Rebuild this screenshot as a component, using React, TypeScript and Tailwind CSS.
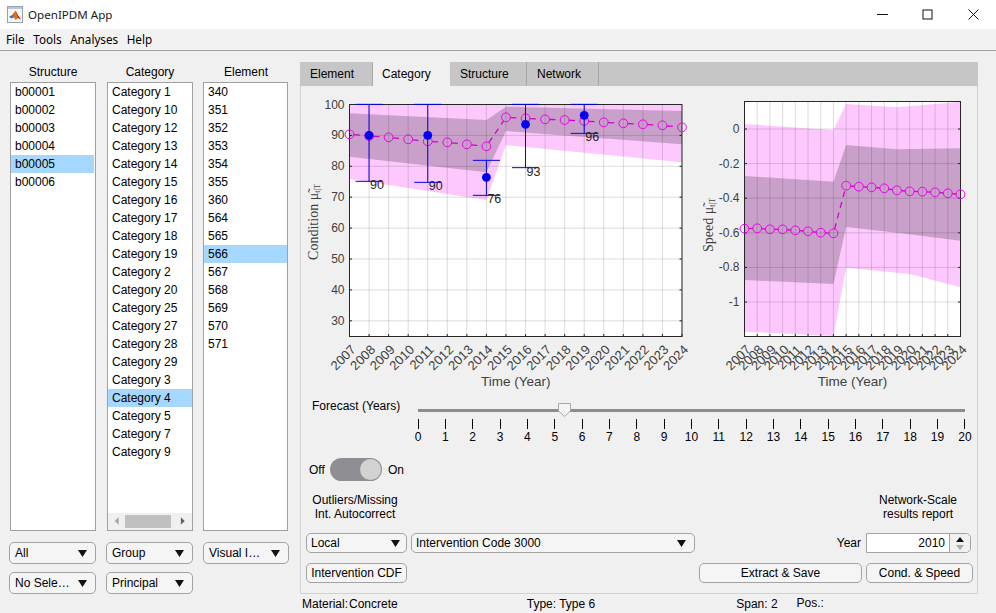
const structures = ["b00001", "b00002", "b00003", "b00004", "b00005", "b00006"];
const categories = [
  "Category 1", "Category 10", "Category 12", "Category 13", "Category 14", "Category 15", "Category 16",
  "Category 17", "Category 18", "Category 19", "Category 2", "Category 20", "Category 25", "Category 27",
  "Category 28", "Category 29", "Category 3", "Category 4", "Category 5", "Category 7", "Category 9",
];
const elements = ["340", "351", "352", "353", "354", "355", "360", "564", "565", "566", "567", "568", "569", "570", "571"];
const years = Array.from({ length: 18 }, (_, i) => 2007 + i);

const AXIS_TEXT = "#404040";
const LIGHT_BAND = "#fdc8fd";
const DARK_BAND = "#c9a0c9";
const MAGENTA = "#f000f0";
const MARKER_R = 4.4;

function Arrow({ color = "#111111" }: { color?: string }) {
  return (
    <svg width="9" height="7" viewBox="0 0 9 7" className="shrink-0">
      <path d="M0 0H9L4.5 7Z" fill={color} />
    </svg>
  );
}

function Dropdown({ label, className }: { label: string; className: string }) {
  return (
    <div className={`flex items-center justify-between h-[22px] pl-[5px] pr-[8px] bg-[#f5f5f5] border border-[#a3a3a3] rounded-[5px] text-[12px] ${className}`}>
      <span>{label}</span>
      <Arrow />
    </div>
  );
}

function PushButton({ label, className }: { label: string; className: string }) {
  return (
    <div className={`flex items-center justify-center h-[20px] bg-[#f5f5f5] border border-[#a3a3a3] rounded-[5px] text-[12px] ${className}`}>
      {label}
    </div>
  );
}

function ListBox({ items, selected, hScroll, className, rowsClass }: { items: string[]; selected: string; hScroll?: boolean; className: string; rowsClass?: string }) {
  return (
    <div className={`flex flex-col bg-white border border-[#a0a0a0] text-[12px] ${className}`}>
      <div className={`flex-1 ${rowsClass ?? ""}`}>
        {items.map((item) => (
          <div key={item} className={`h-[18px] leading-[18px] pl-[4px] ${item === selected ? "bg-[#a6d8ff]" : ""}`}>
            {item}
          </div>
        ))}
      </div>
      {hScroll && (
        <div className="flex items-center h-[17px] bg-[#f0f0f0]">
          <svg width="16" height="9" viewBox="0 0 16 9" className="ml-[1px]">
            <path d="M10 0V8L6 4Z" fill="#a3a3a3" />
          </svg>
          <div className="w-[47px] h-[13px] ml-[1px] bg-[#c0c0c0]" />
          <svg width="16" height="9" viewBox="0 0 16 9" className="ml-[6px]">
            <path d="M4 0V8L8 4Z" fill="#606060" />
          </svg>
        </div>
      )}
    </div>
  );
}

function Column({ title, children }: { title: string; children: React.ReactNode }) {
  return (
    <div className="flex flex-col">
      <div className="h-[31px] pt-[14px] text-center text-[12px] leading-[14px]">{title}</div>
      {children}
    </div>
  );
}

type PlotSpec = {
  viewBox: string;
  width: number;
  left: number;
  right: number;
  top: number;
  bottom: number;
  yTicks: { label: string; y: number }[];
  lightBand: string;
  darkBand: string;
  means: number[];
  label: string;
  labelY: number;
  yTextX: number;
  clipId: string;
};

function Plot({ spec, children }: { spec: PlotSpec; children?: React.ReactNode }) {
  const { left, right, top, bottom } = spec;
  const step = (right - left) / 17;
  const xs = years.map((_, i) => left + i * step);
  return (
    <svg width={spec.width} height="309" viewBox={spec.viewBox} className="block shrink-0" style={{ fontFamily: '"Liberation Sans", Arial, sans-serif' }}>
      <defs>
        <clipPath id={spec.clipId}>
          <rect x={left} y={top} width={right - left} height={bottom - top} />
        </clipPath>
      </defs>
      <rect x={left} y={top} width={right - left} height={bottom - top} fill="#ffffff" />
      <g clipPath={`url(#${spec.clipId})`}>
        <polygon points={spec.lightBand} fill={LIGHT_BAND} />
        <polygon points={spec.darkBand} fill={DARK_BAND} />
        {xs.map((x) => (
          <line key={x} x1={x} x2={x} y1={top} y2={bottom} stroke="#262626" strokeOpacity="0.16" />
        ))}
        {spec.yTicks.map((t) => (
          <line key={t.label} x1={left} x2={right} y1={t.y} y2={t.y} stroke="#262626" strokeOpacity="0.16" />
        ))}
      </g>
      <rect x={left} y={top} width={right - left} height={bottom - top} fill="none" stroke="#262626" />
      {xs.map((x) => (
        <line key={x} x1={x} x2={x} y1={bottom} y2={bottom - 2.5} stroke="#262626" />
      ))}
      {spec.yTicks.map((t) => (
        <g key={t.label}>
          <line x1={left} x2={left + 2.5} y1={t.y} y2={t.y} stroke="#262626" />
          <line x1={right} x2={right - 2.5} y1={t.y} y2={t.y} stroke="#262626" />
          <text x={left - 5} y={t.y + 4} textAnchor="end" fontSize="12" fill={AXIS_TEXT}>
            {t.label}
          </text>
        </g>
      ))}
      {/* each segment starts at the marker edge so the dash pattern restarts there */}
      {spec.means.slice(0, -1).map((y, i) => {
        const x1 = xs[i];
        const x2 = xs[i + 1];
        const y2 = spec.means[i + 1];
        const len = Math.hypot(x2 - x1, y2 - y);
        const ux = (x2 - x1) / len;
        const uy = (y2 - y) / len;
        return (
          <line
            key={i}
            x1={x1 + ux * MARKER_R}
            y1={y + uy * MARKER_R}
            x2={x2 - ux * MARKER_R}
            y2={y2 - uy * MARKER_R}
            stroke="#d000d0"
            strokeWidth="1.3"
            strokeDasharray="6 5"
          />
        );
      })}
      {spec.means.map((y, i) => (
        <circle key={i} cx={xs[i]} cy={y} r={MARKER_R} fill="none" stroke={MAGENTA} strokeWidth="1" />
      ))}
      {children}
      {xs.map((x, i) => (
        <text key={x} x={x + 7} y={bottom + 14} textAnchor="end" fontSize="13" fill={AXIS_TEXT} transform={`rotate(-45 ${x + 7} ${bottom + 14})`}>
          {years[i]}
        </text>
      ))}
      <text x={(left + right) / 2} y={bottom + 49} textAnchor="middle" fontSize="13.5" fill={AXIS_TEXT}>
        Time (Year)
      </text>
      <text
        x={spec.yTextX}
        y={spec.labelY}
        textAnchor="middle"
        fontSize="14"
        fill={AXIS_TEXT}
        transform={`rotate(-90 ${spec.yTextX} ${spec.labelY})`}
        style={{ fontFamily: '"Liberation Serif", serif' }}
      >
        {spec.label} μ̃<tspan fontSize="8" dy="2">t|T</tspan>
      </text>
    </svg>
  );
}

const condY = (z: number) => 55 + z / 3;
const condX = (i: number) => 349.5 + (i * 332.5) / 17;

const conditionSpec: PlotSpec = {
  viewBox: "301 86 399 309",
  width: 399,
  left: 349.5,
  right: 682,
  top: 104.5,
  bottom: 336.5,
  yTicks: [100, 90, 80, 70, 60, 50, 40, 30].map((v) => ({ label: String(v), y: 104.5 + (100 - v) * 3.09 })),
  lightBand: `${condX(0)},100 ${condX(17)},100 ${condX(17)},${condY(322)} ${condX(8)},${condY(270)} ${condX(7)},${condY(435)} ${condX(0)},${condY(372)}`,
  darkBand: `${condX(0)},${condY(175)} ${condX(7)},${condY(195)} ${condX(8)},${condY(155)} ${condX(17)},${condY(168)} ${condX(17)},${condY(268)} ${condX(8)},${condY(228)} ${condX(7)},${condY(352)} ${condX(0)},${condY(305)}`,
  means: [238, 243, 247, 253, 259, 262, 268, 274, 187, 190, 193, 195, 198, 202, 205, 208, 211, 217].map(condY),
  label: "Condition",
  labelY: 222,
  yTextX: 318,
  clipId: "condition-clip",
};

const speedY = (z: number) => 90 + z / 3;
const speedX = (i: number) => 744.5 + (i * 216) / 17;

const speedSpec: PlotSpec = {
  viewBox: "700 86 276 309",
  width: 276,
  left: 744.5,
  right: 960.5,
  top: 101.5,
  bottom: 336.5,
  yTicks: [
    { label: "0", y: 129 },
    { label: "-0.2", y: 163.6 },
    { label: "-0.4", y: 198.2 },
    { label: "-0.6", y: 232.8 },
    { label: "-0.8", y: 267.4 },
    { label: "-1", y: 302 },
  ],
  lightBand: `${speedX(0)},${speedY(102)} ${speedX(7)},${speedY(120)} ${speedX(8)},${speedY(42)} ${speedX(12)},${speedY(52)} ${speedX(17)},${speedY(35)} ${speedX(17)},${speedY(592)} ${speedX(13)},${speedY(552)} ${speedX(8)},${speedY(533)} ${speedX(7)},${speedY(738)} ${speedX(0)},${speedY(725)}`,
  darkBand: `${speedX(0)},${speedY(258)} ${speedX(7)},${speedY(275)} ${speedX(8)},${speedY(165)} ${speedX(12)},${speedY(178)} ${speedX(17)},${speedY(175)} ${speedX(17)},${speedY(452)} ${speedX(12)},${speedY(428)} ${speedX(8)},${speedY(411)} ${speedX(7)},${speedY(582)} ${speedX(0)},${speedY(570)}`,
  means: [416, 415, 418, 418, 421, 424, 428, 430, 287, 290, 292, 295, 301, 304, 305, 307, 310, 313].map(speedY),
  label: "Speed",
  labelY: 225,
  yTextX: 713,
  clipId: "speed-clip",
};

const observations = [
  { i: 1, y: 241, low: 379, high: 148, label: "90", dy: 390 },
  { i: 4, y: 241, low: 382, high: 148, label: "90", dy: 393 },
  { i: 7, y: 367, low: 421, high: 316, label: "76", dy: 432 },
  { i: 9, y: 208, low: 338, high: 148, label: "93", dy: 351 },
  { i: 12, y: 181, low: 235, high: 148, label: "96", dy: 246 },
];

function Observations() {
  return (
    <g>
      {observations.map((o) => {
        const x = condX(o.i);
        return (
          <g key={o.i}>
            <line x1={x} x2={x} y1={condY(o.high)} y2={condY(o.low)} stroke="#0000f0" strokeWidth="1" />
            <line x1={x - 13.5} x2={x + 13.5} y1={condY(o.high)} y2={condY(o.high)} stroke="#0000f0" strokeWidth="1" />
            <line x1={x - 13.5} x2={x + 13.5} y1={condY(o.low)} y2={condY(o.low)} stroke="#0000f0" strokeWidth="1" />
            <circle cx={x} cy={condY(o.y)} r="4.4" fill="#0000f0" />
            <text x={x + 1} y={condY(o.dy) + 4} fontSize="12.5" fill="#262626">
              {o.label}
            </text>
          </g>
        );
      })}
    </g>
  );
}

function ForecastSlider() {
  const ticks = Array.from({ length: 21 }, (_, i) => i);
  return (
    <div className="relative w-[547px] mt-[14px]">
      <div className="h-[3px] bg-[#8c8c8c]" />
      <svg width="13" height="14" viewBox="0 0 13 14" className="absolute left-[140px] top-[-6px]">
        <path d="M0.5 0.5H12.5V8L6.5 13.5L0.5 8Z" fill="#f4f4f4" stroke="#a8a8a8" />
      </svg>
      <div className="flex justify-between mt-[7px]">
        {ticks.map((t) => (
          <div key={t} className="flex flex-col items-center w-0">
            <div className="w-[1px] h-[10px] bg-black shrink-0" />
            <div className="text-[12px] leading-[14px] mt-[1px]">{t}</div>
          </div>
        ))}
      </div>
    </div>
  );
}

function Logo() {
  return (
    <svg width="16" height="17" viewBox="0 0 16 17" className="shrink-0">
      <rect x="0.5" y="0.5" width="15" height="16" fill="#f4f6f8" stroke="#98a2ae" />
      <rect x="1" y="1" width="14" height="2" fill="#bcc5d0" />
      <path d="M2 11L5.5 9L8.5 4.5L11 9.5L14 13.5L11 12L8.5 14L6.5 11Z" fill="#e8701a" />
      <path d="M2 11L5.5 9L7.2 6.8L6.8 11L5 12.5Z" fill="#2f78c4" />
      <path d="M8.5 4.5L11 9.5L14 13.5L11 12L9.5 8Z" fill="#b22a16" />
    </svg>
  );
}

export default function App() {
  return (
    <div className="flex flex-col w-[996px] h-[613px] overflow-hidden bg-[#f0f0f0] text-black" style={{ fontFamily: '"Liberation Sans", Arial, sans-serif' }}>
      <div className="flex items-center h-[29px] bg-white shrink-0">
        <div className="ml-[7px]">
          <Logo />
        </div>
        <span className="ml-[5px] text-[11.6px] text-[#1a1a1a]" style={{ fontFamily: '"Noto Sans", sans-serif' }}>
          OpenIPDM App
        </span>
        <div className="flex ml-auto">
          <div className="flex items-center justify-center w-[45.5px] h-[29px]">
            <svg width="11" height="11" viewBox="0 0 11 11">
              <path d="M0 5.5H11" stroke="#111111" />
            </svg>
          </div>
          <div className="flex items-center justify-center w-[45.5px] h-[29px]">
            <svg width="11" height="11" viewBox="0 0 11 11">
              <rect x="1" y="1" width="9" height="9" fill="none" stroke="#111111" />
            </svg>
          </div>
          <div className="flex items-center justify-center w-[45.5px] h-[29px]">
            <svg width="11" height="11" viewBox="0 0 11 11">
              <path d="M0.5 0.5L10.5 10.5M10.5 0.5L0.5 10.5" stroke="#111111" />
            </svg>
          </div>
        </div>
      </div>

      <div className="flex items-center gap-[8.5px] h-[22px] pl-[6px] bg-[#f2f2f2] border-b border-[#a0a0a0] text-[11.7px] shrink-0" style={{ fontFamily: '"Noto Sans", sans-serif' }}>
        <span>File</span>
        <span>Tools</span>
        <span>Analyses</span>
        <span>Help</span>
      </div>

      <div className="flex flex-1 min-h-0">
        <div className="flex w-[300px] shrink-0 pl-[10px] gap-[11px]">
          <Column title="Structure">
            <ListBox items={structures} selected="b00005" rowsClass="pr-[1px]" className="w-[86px] h-[449px]" />
            <Dropdown label="All" className="w-[87px] -ml-[1px] mt-[11px]" />
            <Dropdown label="No Sele…" className="w-[87px] -ml-[1px] mt-[8px]" />
          </Column>
          <Column title="Category">
            <ListBox items={categories} selected="Category 4" hScroll className="w-[86px] h-[449px]" />
            <Dropdown label="Group" className="w-[87px] -ml-[1px] mt-[11px]" />
            <Dropdown label="Principal" className="w-[87px] -ml-[1px] mt-[8px]" />
          </Column>
          <div className="-ml-[1px]">
            <Column title="Element">
              <ListBox items={elements} selected="566" className="w-[85px] h-[449px]" />
              <Dropdown label="Visual I…" className="w-[86px] mt-[11px]" />
            </Column>
          </div>
        </div>

        <div className="flex flex-col flex-1 min-w-0">
          <div className="flex flex-col w-[678px] h-[532px] mt-[11px] shrink-0">
            <div className="flex h-[24px] bg-[#c6c6c6] text-[12px] shrink-0">
              <div className="flex items-center w-[73px] pl-[10px] border-r border-[#a8a8a8]">Element</div>
              <div className="flex items-center w-[77px] pl-[9px] bg-[#f0f0f0]">Category</div>
              <div className="flex items-center w-[77px] pl-[10px] border-r border-[#a8a8a8]">Structure</div>
              <div className="flex items-center w-[72px] pl-[10px] border-r border-[#a8a8a8]">Network</div>
            </div>
            <div className="flex flex-col flex-1 border-x border-b border-[#d2d2d2] text-[12px]">
              <div className="flex">
                <Plot spec={conditionSpec}>
                  <Observations />
                </Plot>
                <Plot spec={speedSpec} />
              </div>

              <div className="flex h-[50px] pl-[11px]">
                <div className="w-[106px] pt-[4px] leading-[14px]">Forecast (Years)</div>
                <ForecastSlider />
              </div>

              <div className="flex items-center h-[23px] mt-[13px] pl-[8px]">
                <span className="w-[21px]">Off</span>
                <div className="flex justify-end w-[52px] h-[23px] rounded-full bg-[#8e8e93]">
                  <div className="w-[21px] h-[21px] mt-[1px] mr-[1px] rounded-full bg-[#d2d2d2]" />
                </div>
                <span className="ml-[6px]">On</span>
              </div>

              <div className="flex justify-between mt-[12px] leading-[14px]">
                <div className="w-[106px] ml-[1px] text-center">
                  <div>Outliers/Missing</div>
                  <div>Int. Autocorrect</div>
                </div>
                <div className="w-[100px] mr-[9px] text-center">
                  <div>Network-Scale</div>
                  <div>results report</div>
                </div>
              </div>

              <div className="flex items-center h-[20px] mt-[12px] pl-[5px]">
                <div className="flex items-center justify-between w-[101px] h-[20px] pl-[4px] pr-[6px] bg-[#f5f5f5] border border-[#a3a3a3] rounded-[5px]">
                  <span>Local</span>
                  <Arrow />
                </div>
                <div className="flex items-center justify-between w-[284px] h-[20px] ml-[4px] pl-[4px] pr-[8px] bg-[#f5f5f5] border border-[#a3a3a3] rounded-[5px]">
                  <span>Intervention Code 3000</span>
                  <Arrow />
                </div>
                <span className="ml-auto mr-[5px]">Year</span>
                <div className="flex w-[105px] h-[20px] mr-[6px] bg-white border border-[#a3a3a3] rounded-r-[5px]">
                  <div className="flex-1 pr-[4px] text-right leading-[18px]">2010</div>
                  <div className="flex flex-col items-center justify-center gap-[3px] w-[21px] bg-[#f0f0f0] border-l border-[#a3a3a3] rounded-r-[5px]">
                    <svg width="8" height="5" viewBox="0 0 8 5">
                      <path d="M0 5H8L4 0Z" fill="#111111" />
                    </svg>
                    <svg width="8" height="5" viewBox="0 0 8 5">
                      <path d="M0 0H8L4 5Z" fill="#a8a8a8" />
                    </svg>
                  </div>
                </div>
              </div>

              <div className="flex items-center h-[20px] mt-[10px] pl-[5px]">
                <PushButton label="Intervention CDF" className="w-[101px]" />
                <PushButton label="Extract & Save" className="w-[163px] ml-auto" />
                <PushButton label="Cond. & Speed" className="w-[107px] ml-[4px] mr-[4px]" />
              </div>
            </div>
          </div>

          <div className="flex items-center h-[19px] text-[12px]">
            <span className="ml-[2px]">Material:</span>
            <span className="ml-[1px]">Concrete</span>
            <span className="ml-[129px]">Type: Type 6</span>
            <span className="ml-[141px]">Span: 2</span>
            <span className="ml-[19px] -mt-[1px]">Pos.:</span>
          </div>
        </div>
      </div>
    </div>
  );
}
